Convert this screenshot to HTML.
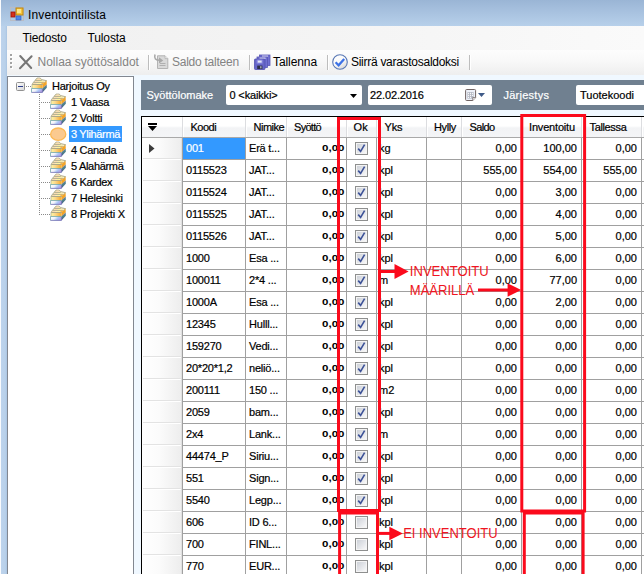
<!DOCTYPE html>
<html lang="fi"><head><meta charset="utf-8"><title>Inventointilista</title>
<style>
html,body{margin:0;padding:0;}
body{width:644px;height:574px;overflow:hidden;position:relative;background:#b9d1ea;font-family:"Liberation Sans",sans-serif;}
div,span{position:absolute;box-sizing:border-box;white-space:pre;}
.ms,.c,.hd{-webkit-text-stroke:0.2px currentColor;}
svg{position:absolute;overflow:visible;}
.seg{font-size:12px;line-height:16px;color:#000;}
.ms{font-size:11px;line-height:16px;color:#000;}
.dis{color:#838383;}
.hl{left:0;width:503px;height:1px;background:#a0a0a0;}
.vl{top:0;width:1px;background:#a0a0a0;}
.c{height:21px;line-height:21px;font-size:11px;}
.r{text-align:right;}
.l{letter-spacing:-0.2px;}
.b{font-weight:bold;}
.rh{left:1px;width:40px;height:21px;background:linear-gradient(90deg,#ffffff 0%,#fbfbfb 40%,#ececec 100%);border-bottom:1px solid #e3e3e3;}
.cb{width:13px;height:13px;border:1px solid #8e8f8f;background:#f4f4f4;}
.cb i{position:absolute;left:1px;top:1px;width:9px;height:9px;background:linear-gradient(135deg,#cdd1d8 0%,#e2e4e8 50%,#f8f8f9 100%);border:0;}
.sy{height:21px;line-height:20px;font-size:8.6px;font-weight:bold;text-align:right;transform:scaleX(1.34);transform-origin:100% 50%;}
.hd{top:1px;height:20px;font-size:11px;line-height:20px;}
</style></head><body>

<div id="titlebar" style="left:0;top:0;width:644px;height:26px;background:linear-gradient(180deg,#9ab5d5 0%,#a6c0de 40%,#b7d0ea 100%);"></div>
<div style="left:0;top:0;width:1px;height:574px;background:#fafbfd;"></div>
<div style="left:1px;top:26px;width:6px;height:548px;background:linear-gradient(90deg,#bdd3ec 0%,#b9d1ea 70%,#a9c4e2 100%);"></div>
<svg style="left:10px;top:7px" width="14" height="14" viewBox="0 0 14 14">
<rect x="0.5" y="0.5" width="13" height="13" fill="none" stroke="#b9bcc4" stroke-width="1"/>
<rect x="6" y="1" width="7" height="7" fill="#f6c33a" stroke="#b98410" stroke-width="1"/>
<rect x="7" y="2" width="4" height="4" fill="#fde58a"/>
<rect x="1" y="5" width="4" height="5" fill="#d6301c" stroke="#9c1408" stroke-width="0.8"/>
<rect x="6" y="9" width="5" height="4" fill="#4f86ea" stroke="#2b5fc4" stroke-width="0.6"/>
</svg>
<span class="seg" id="t_title" style="left:28px;top:7px;letter-spacing:0.13px;">Inventointilista</span>
<div style="left:7px;top:26px;width:637px;height:24px;background:linear-gradient(90deg,#f0f0f0 0%,#f4f4f4 50%,#fafafa 100%);"></div>
<span class="seg" id="t_m1" style="left:22.5px;top:30px;letter-spacing:-0.18px;">Tiedosto</span>
<span class="seg" id="t_m2" style="left:87.5px;top:30px;letter-spacing:-0.13px;">Tulosta</span>
<div style="left:7px;top:50px;width:637px;height:25px;background:linear-gradient(180deg,#fdfdfd 0%,#f8f8f8 45%,#eeeeee 100%);"></div>
<div style="left:11px;top:55px;width:2px;height:2px;background:#ffffff;"></div>
<div style="left:10px;top:54px;width:2px;height:2px;background:#a3a3a3;"></div>
<div style="left:11px;top:59px;width:2px;height:2px;background:#ffffff;"></div>
<div style="left:10px;top:58px;width:2px;height:2px;background:#a3a3a3;"></div>
<div style="left:11px;top:63px;width:2px;height:2px;background:#ffffff;"></div>
<div style="left:10px;top:62px;width:2px;height:2px;background:#a3a3a3;"></div>
<div style="left:11px;top:67px;width:2px;height:2px;background:#ffffff;"></div>
<div style="left:10px;top:66px;width:2px;height:2px;background:#a3a3a3;"></div>
<svg style="left:19px;top:55px" width="14" height="14" viewBox="0 0 14 14">
<path d="M1.2 1 L12.2 13 M12.6 1.2 L1 13.2" stroke="#767676" stroke-width="2" fill="none" stroke-linecap="round"/>
</svg>
<span class="seg dis" id="t_b1" style="left:37.5px;top:54px;">Nollaa syöttösaldot</span>
<div style="left:148px;top:55px;width:1px;height:15px;background:#bdbdbd;"></div>
<div style="left:149px;top:55px;width:1px;height:15px;background:#ffffff;"></div>
<svg style="left:153px;top:54px" width="16" height="16" viewBox="0 0 16 16">
<path d="M4.5 1.8 H12 L14.8 4.6 V14.5 H4.5 Z" fill="#d9d9d9" stroke="#b3b3b3" stroke-width="1"/>
<path d="M12 1.8 V4.6 H14.8" fill="#efefef" stroke="#b3b3b3" stroke-width="0.8"/>
<path d="M7 9.5 H12.5 M6.5 11.5 H12.5" stroke="#b0b0b0" stroke-width="1"/>
<path d="M2 0.5 C1 4.5 2.5 6.3 7 6.3" stroke="#a9a9a9" stroke-width="1.6" fill="none"/>
<path d="M6 3.2 L10.2 6.4 L6 9.6 Z" fill="#a9a9a9"/>
</svg>
<span class="seg dis" id="t_b2" style="left:172px;top:54px;letter-spacing:-0.25px;">Saldo talteen</span>
<div style="left:249px;top:55px;width:1px;height:15px;background:#bdbdbd;"></div>
<div style="left:250px;top:55px;width:1px;height:15px;background:#ffffff;"></div>
<svg style="left:254px;top:54px" width="16" height="16" viewBox="0 0 16 16">
<rect x="5.5" y="1" width="10.5" height="10.5" fill="#7170d2" stroke="#5856b4" stroke-width="0.8"/>
<rect x="8" y="1.6" width="6" height="1.2" fill="#e9e9fb"/>
<rect x="3" y="3" width="10.5" height="10.5" fill="#7170d2" stroke="#5856b4" stroke-width="0.8"/>
<rect x="5.5" y="3.6" width="6" height="1.2" fill="#e9e9fb"/>
<rect x="0.5" y="5" width="10.5" height="10.5" rx="0.8" fill="#6665c8" stroke="#5250ae" stroke-width="0.8"/>
<rect x="2.6" y="5.6" width="6" height="4" fill="#8c8be0"/>
<rect x="3.8" y="6.6" width="3.8" height="2" fill="#e4e6f4"/>
<rect x="3.2" y="11.6" width="5.2" height="3.4" fill="#2d3048"/>
<rect x="6" y="12.2" width="1.6" height="2.2" fill="#9aa0b0"/>
</svg>
<span class="seg" id="t_b3" style="left:273px;top:54px;letter-spacing:-0.09px;">Tallenna</span>
<div style="left:327px;top:55px;width:1px;height:15px;background:#bdbdbd;"></div>
<div style="left:328px;top:55px;width:1px;height:15px;background:#ffffff;"></div>
<svg style="left:332px;top:54px" width="16" height="16" viewBox="0 0 16 16">
<defs><linearGradient id="cg" x1="0" y1="0" x2="0.6" y2="1"><stop offset="0" stop-color="#ffffff"/><stop offset="0.6" stop-color="#fafafa"/><stop offset="1" stop-color="#d9d9d9"/></linearGradient></defs>
<circle cx="8" cy="8" r="7.3" fill="url(#cg)" stroke="#5877b4" stroke-width="1.1"/>
<path d="M3.6 8.2 L6.6 11.2 L12.2 4.9" fill="none" stroke="#3d72e6" stroke-width="2.3"/>
</svg>
<span class="seg" id="t_b4" style="left:351px;top:54px;letter-spacing:-0.28px;">Siirrä varastosaldoksi</span>
<div style="left:469px;top:55px;width:1px;height:15px;background:#bdbdbd;"></div>
<div style="left:470px;top:55px;width:1px;height:15px;background:#ffffff;"></div>
<div style="left:7px;top:75px;width:637px;height:499px;background:#f0f8ff;"></div>
<div id="tree" style="left:7px;top:76px;width:127px;height:520px;background:#fff;border:1px solid #828790;"></div>
<div style="left:39px;top:94px;width:1px;height:121px;background:repeating-linear-gradient(180deg,#8a8a8a 0 1px,transparent 1px 2px);"></div>
<div style="left:25px;top:86px;width:6px;height:1px;background:repeating-linear-gradient(90deg,transparent 0 1px,#8a8a8a 1px 2px);"></div>
<svg style="left:16px;top:82px" width="9" height="9" viewBox="0 0 9 9">
<defs><linearGradient id="eg" x1="0" y1="0" x2="1" y2="1"><stop offset="0" stop-color="#ffffff"/><stop offset="1" stop-color="#d6d6d6"/></linearGradient></defs>
<rect x="0.5" y="0.5" width="8" height="8" rx="1" fill="url(#eg)" stroke="#919191"/>
<rect x="2" y="4" width="5" height="1" fill="#2b3c8a"/></svg>
<svg style="left:31px;top:77px" width="17" height="16" viewBox="0 0 17 16">
<defs>
<linearGradient id="bf0" x1="0" y1="0" x2="1" y2="0"><stop offset="0" stop-color="#fdf7a4"/><stop offset="0.4" stop-color="#fbd98c"/><stop offset="0.7" stop-color="#f9c05a"/><stop offset="1" stop-color="#f3aa2e"/></linearGradient>
<linearGradient id="bw0" x1="0" y1="0" x2="1" y2="0.3"><stop offset="0" stop-color="#ffffff"/><stop offset="0.45" stop-color="#f2f4fb"/><stop offset="0.75" stop-color="#a9c6f7"/><stop offset="1" stop-color="#b7a6e6"/></linearGradient>
<linearGradient id="bs0" x1="0" y1="0" x2="0.3" y2="1"><stop offset="0" stop-color="#8079c0"/><stop offset="0.6" stop-color="#4b8286"/><stop offset="1" stop-color="#46468e"/></linearGradient>
</defs>
<path d="M1.2 7.4 L2.4 5.4 L4.2 3.3 L6 1.1 L9.3 1.1 L10.6 2.6 L15.6 3.7 L11.5 7.6 Z" fill="#fbeebc" stroke="#a9a688" stroke-width="0.9" stroke-linejoin="round"/>
<path d="M11.5 7.6 L15.6 3.7 L15.75 7.6 L11.5 11.4 Z" fill="#f2a42a"/>
<path d="M11.5 11.3 L15.75 7.5 L15.8 10.8 L11.4 15.5 Z" fill="url(#bs0)"/>
<path d="M1.1 7.6 H11.5 V11.4 H1.0 Z" fill="url(#bf0)"/>
<path d="M4.2 3.4 H10.8 M2.5 5.4 H12.9 M1.1 7.5 H11.6" stroke="#a9a688" stroke-width="0.9" fill="none"/>
<path d="M1 7.4 V11.4" stroke="#b7b28e" stroke-width="0.8"/>
<rect x="6.4" y="1.6" width="2.6" height="1.3" rx="0.6" fill="#fdd9b0"/>
<rect x="4.4" y="3.9" width="2.6" height="1.1" rx="0.5" fill="#fdd9b0"/><rect x="8.3" y="3.9" width="2.8" height="1.1" rx="0.5" fill="#fdf49a"/>
<rect x="2.6" y="5.9" width="2.6" height="1.1" rx="0.5" fill="#fdd9b0"/><rect x="6.6" y="5.9" width="3" height="1.1" rx="0.5" fill="#fdf49a"/><rect x="10.4" y="5.6" width="2.6" height="1.3" rx="0.5" fill="#f6b64a"/>
<path d="M0.5 11.5 H11.4 V15.4 H0.5 Z" fill="url(#bw0)"/>
<path d="M0.5 15.4 V11.5 H11.4" fill="none" stroke="#5d9c9f" stroke-width="0.7"/>
<path d="M0.5 15.4 H11.4 V11.8" fill="none" stroke="#5a5aa8" stroke-width="0.7"/>
</svg>
<span class="ms" id="t_root" style="left:52px;top:78px;letter-spacing:-0.229px;">Harjoitus Oy</span>
<div style="left:40px;top:102px;width:10px;height:1px;background:repeating-linear-gradient(90deg,transparent 0 1px,#8a8a8a 1px 2px);"></div>
<svg style="left:50px;top:93px" width="17" height="16" viewBox="0 0 17 16">
<defs>
<linearGradient id="bf1" x1="0" y1="0" x2="1" y2="0"><stop offset="0" stop-color="#fdf7a4"/><stop offset="0.4" stop-color="#fbd98c"/><stop offset="0.7" stop-color="#f9c05a"/><stop offset="1" stop-color="#f3aa2e"/></linearGradient>
<linearGradient id="bw1" x1="0" y1="0" x2="1" y2="0.3"><stop offset="0" stop-color="#ffffff"/><stop offset="0.45" stop-color="#f2f4fb"/><stop offset="0.75" stop-color="#a9c6f7"/><stop offset="1" stop-color="#b7a6e6"/></linearGradient>
<linearGradient id="bs1" x1="0" y1="0" x2="0.3" y2="1"><stop offset="0" stop-color="#8079c0"/><stop offset="0.6" stop-color="#4b8286"/><stop offset="1" stop-color="#46468e"/></linearGradient>
</defs>
<path d="M1.2 7.4 L2.4 5.4 L4.2 3.3 L6 1.1 L9.3 1.1 L10.6 2.6 L15.6 3.7 L11.5 7.6 Z" fill="#fbeebc" stroke="#a9a688" stroke-width="0.9" stroke-linejoin="round"/>
<path d="M11.5 7.6 L15.6 3.7 L15.75 7.6 L11.5 11.4 Z" fill="#f2a42a"/>
<path d="M11.5 11.3 L15.75 7.5 L15.8 10.8 L11.4 15.5 Z" fill="url(#bs1)"/>
<path d="M1.1 7.6 H11.5 V11.4 H1.0 Z" fill="url(#bf1)"/>
<path d="M4.2 3.4 H10.8 M2.5 5.4 H12.9 M1.1 7.5 H11.6" stroke="#a9a688" stroke-width="0.9" fill="none"/>
<path d="M1 7.4 V11.4" stroke="#b7b28e" stroke-width="0.8"/>
<rect x="6.4" y="1.6" width="2.6" height="1.3" rx="0.6" fill="#fdd9b0"/>
<rect x="4.4" y="3.9" width="2.6" height="1.1" rx="0.5" fill="#fdd9b0"/><rect x="8.3" y="3.9" width="2.8" height="1.1" rx="0.5" fill="#fdf49a"/>
<rect x="2.6" y="5.9" width="2.6" height="1.1" rx="0.5" fill="#fdd9b0"/><rect x="6.6" y="5.9" width="3" height="1.1" rx="0.5" fill="#fdf49a"/><rect x="10.4" y="5.6" width="2.6" height="1.3" rx="0.5" fill="#f6b64a"/>
<path d="M0.5 11.5 H11.4 V15.4 H0.5 Z" fill="url(#bw1)"/>
<path d="M0.5 15.4 V11.5 H11.4" fill="none" stroke="#5d9c9f" stroke-width="0.7"/>
<path d="M0.5 15.4 H11.4 V11.8" fill="none" stroke="#5a5aa8" stroke-width="0.7"/>
</svg>
<span class="ms" id="t_k0" style="left:71px;top:94px;letter-spacing:-0.208px;">1 Vaasa</span>
<div style="left:40px;top:118px;width:10px;height:1px;background:repeating-linear-gradient(90deg,transparent 0 1px,#8a8a8a 1px 2px);"></div>
<svg style="left:50px;top:109px" width="17" height="16" viewBox="0 0 17 16">
<defs>
<linearGradient id="bf2" x1="0" y1="0" x2="1" y2="0"><stop offset="0" stop-color="#fdf7a4"/><stop offset="0.4" stop-color="#fbd98c"/><stop offset="0.7" stop-color="#f9c05a"/><stop offset="1" stop-color="#f3aa2e"/></linearGradient>
<linearGradient id="bw2" x1="0" y1="0" x2="1" y2="0.3"><stop offset="0" stop-color="#ffffff"/><stop offset="0.45" stop-color="#f2f4fb"/><stop offset="0.75" stop-color="#a9c6f7"/><stop offset="1" stop-color="#b7a6e6"/></linearGradient>
<linearGradient id="bs2" x1="0" y1="0" x2="0.3" y2="1"><stop offset="0" stop-color="#8079c0"/><stop offset="0.6" stop-color="#4b8286"/><stop offset="1" stop-color="#46468e"/></linearGradient>
</defs>
<path d="M1.2 7.4 L2.4 5.4 L4.2 3.3 L6 1.1 L9.3 1.1 L10.6 2.6 L15.6 3.7 L11.5 7.6 Z" fill="#fbeebc" stroke="#a9a688" stroke-width="0.9" stroke-linejoin="round"/>
<path d="M11.5 7.6 L15.6 3.7 L15.75 7.6 L11.5 11.4 Z" fill="#f2a42a"/>
<path d="M11.5 11.3 L15.75 7.5 L15.8 10.8 L11.4 15.5 Z" fill="url(#bs2)"/>
<path d="M1.1 7.6 H11.5 V11.4 H1.0 Z" fill="url(#bf2)"/>
<path d="M4.2 3.4 H10.8 M2.5 5.4 H12.9 M1.1 7.5 H11.6" stroke="#a9a688" stroke-width="0.9" fill="none"/>
<path d="M1 7.4 V11.4" stroke="#b7b28e" stroke-width="0.8"/>
<rect x="6.4" y="1.6" width="2.6" height="1.3" rx="0.6" fill="#fdd9b0"/>
<rect x="4.4" y="3.9" width="2.6" height="1.1" rx="0.5" fill="#fdd9b0"/><rect x="8.3" y="3.9" width="2.8" height="1.1" rx="0.5" fill="#fdf49a"/>
<rect x="2.6" y="5.9" width="2.6" height="1.1" rx="0.5" fill="#fdd9b0"/><rect x="6.6" y="5.9" width="3" height="1.1" rx="0.5" fill="#fdf49a"/><rect x="10.4" y="5.6" width="2.6" height="1.3" rx="0.5" fill="#f6b64a"/>
<path d="M0.5 11.5 H11.4 V15.4 H0.5 Z" fill="url(#bw2)"/>
<path d="M0.5 15.4 V11.5 H11.4" fill="none" stroke="#5d9c9f" stroke-width="0.7"/>
<path d="M0.5 15.4 H11.4 V11.8" fill="none" stroke="#5a5aa8" stroke-width="0.7"/>
</svg>
<span class="ms" id="t_k1" style="left:71px;top:110px;letter-spacing:-0.217px;">2 Voltti</span>
<div style="left:40px;top:134px;width:10px;height:1px;background:repeating-linear-gradient(90deg,transparent 0 1px,#8a8a8a 1px 2px);"></div>
<svg style="left:50px;top:126px" width="17" height="16" viewBox="0 0 17 16"><ellipse cx="8.2" cy="8.2" rx="7.6" ry="6.2" fill="#fbca90" stroke="#fcb955" stroke-width="1.3"/></svg>
<div style="left:69px;top:126px;width:53px;height:16px;background:#3399ff;"></div>
<span class="ms" id="t_k2" style="left:71px;top:126px;color:#fff;letter-spacing:-0.331px;">3 Ylihärmä</span>
<div style="left:40px;top:150px;width:10px;height:1px;background:repeating-linear-gradient(90deg,transparent 0 1px,#8a8a8a 1px 2px);"></div>
<svg style="left:50px;top:141px" width="17" height="16" viewBox="0 0 17 16">
<defs>
<linearGradient id="bf4" x1="0" y1="0" x2="1" y2="0"><stop offset="0" stop-color="#fdf7a4"/><stop offset="0.4" stop-color="#fbd98c"/><stop offset="0.7" stop-color="#f9c05a"/><stop offset="1" stop-color="#f3aa2e"/></linearGradient>
<linearGradient id="bw4" x1="0" y1="0" x2="1" y2="0.3"><stop offset="0" stop-color="#ffffff"/><stop offset="0.45" stop-color="#f2f4fb"/><stop offset="0.75" stop-color="#a9c6f7"/><stop offset="1" stop-color="#b7a6e6"/></linearGradient>
<linearGradient id="bs4" x1="0" y1="0" x2="0.3" y2="1"><stop offset="0" stop-color="#8079c0"/><stop offset="0.6" stop-color="#4b8286"/><stop offset="1" stop-color="#46468e"/></linearGradient>
</defs>
<path d="M1.2 7.4 L2.4 5.4 L4.2 3.3 L6 1.1 L9.3 1.1 L10.6 2.6 L15.6 3.7 L11.5 7.6 Z" fill="#fbeebc" stroke="#a9a688" stroke-width="0.9" stroke-linejoin="round"/>
<path d="M11.5 7.6 L15.6 3.7 L15.75 7.6 L11.5 11.4 Z" fill="#f2a42a"/>
<path d="M11.5 11.3 L15.75 7.5 L15.8 10.8 L11.4 15.5 Z" fill="url(#bs4)"/>
<path d="M1.1 7.6 H11.5 V11.4 H1.0 Z" fill="url(#bf4)"/>
<path d="M4.2 3.4 H10.8 M2.5 5.4 H12.9 M1.1 7.5 H11.6" stroke="#a9a688" stroke-width="0.9" fill="none"/>
<path d="M1 7.4 V11.4" stroke="#b7b28e" stroke-width="0.8"/>
<rect x="6.4" y="1.6" width="2.6" height="1.3" rx="0.6" fill="#fdd9b0"/>
<rect x="4.4" y="3.9" width="2.6" height="1.1" rx="0.5" fill="#fdd9b0"/><rect x="8.3" y="3.9" width="2.8" height="1.1" rx="0.5" fill="#fdf49a"/>
<rect x="2.6" y="5.9" width="2.6" height="1.1" rx="0.5" fill="#fdd9b0"/><rect x="6.6" y="5.9" width="3" height="1.1" rx="0.5" fill="#fdf49a"/><rect x="10.4" y="5.6" width="2.6" height="1.3" rx="0.5" fill="#f6b64a"/>
<path d="M0.5 11.5 H11.4 V15.4 H0.5 Z" fill="url(#bw4)"/>
<path d="M0.5 15.4 V11.5 H11.4" fill="none" stroke="#5d9c9f" stroke-width="0.7"/>
<path d="M0.5 15.4 H11.4 V11.8" fill="none" stroke="#5a5aa8" stroke-width="0.7"/>
</svg>
<span class="ms" id="t_k3" style="left:71px;top:142px;letter-spacing:-0.315px;">4 Canada</span>
<div style="left:40px;top:166px;width:10px;height:1px;background:repeating-linear-gradient(90deg,transparent 0 1px,#8a8a8a 1px 2px);"></div>
<svg style="left:50px;top:157px" width="17" height="16" viewBox="0 0 17 16">
<defs>
<linearGradient id="bf5" x1="0" y1="0" x2="1" y2="0"><stop offset="0" stop-color="#fdf7a4"/><stop offset="0.4" stop-color="#fbd98c"/><stop offset="0.7" stop-color="#f9c05a"/><stop offset="1" stop-color="#f3aa2e"/></linearGradient>
<linearGradient id="bw5" x1="0" y1="0" x2="1" y2="0.3"><stop offset="0" stop-color="#ffffff"/><stop offset="0.45" stop-color="#f2f4fb"/><stop offset="0.75" stop-color="#a9c6f7"/><stop offset="1" stop-color="#b7a6e6"/></linearGradient>
<linearGradient id="bs5" x1="0" y1="0" x2="0.3" y2="1"><stop offset="0" stop-color="#8079c0"/><stop offset="0.6" stop-color="#4b8286"/><stop offset="1" stop-color="#46468e"/></linearGradient>
</defs>
<path d="M1.2 7.4 L2.4 5.4 L4.2 3.3 L6 1.1 L9.3 1.1 L10.6 2.6 L15.6 3.7 L11.5 7.6 Z" fill="#fbeebc" stroke="#a9a688" stroke-width="0.9" stroke-linejoin="round"/>
<path d="M11.5 7.6 L15.6 3.7 L15.75 7.6 L11.5 11.4 Z" fill="#f2a42a"/>
<path d="M11.5 11.3 L15.75 7.5 L15.8 10.8 L11.4 15.5 Z" fill="url(#bs5)"/>
<path d="M1.1 7.6 H11.5 V11.4 H1.0 Z" fill="url(#bf5)"/>
<path d="M4.2 3.4 H10.8 M2.5 5.4 H12.9 M1.1 7.5 H11.6" stroke="#a9a688" stroke-width="0.9" fill="none"/>
<path d="M1 7.4 V11.4" stroke="#b7b28e" stroke-width="0.8"/>
<rect x="6.4" y="1.6" width="2.6" height="1.3" rx="0.6" fill="#fdd9b0"/>
<rect x="4.4" y="3.9" width="2.6" height="1.1" rx="0.5" fill="#fdd9b0"/><rect x="8.3" y="3.9" width="2.8" height="1.1" rx="0.5" fill="#fdf49a"/>
<rect x="2.6" y="5.9" width="2.6" height="1.1" rx="0.5" fill="#fdd9b0"/><rect x="6.6" y="5.9" width="3" height="1.1" rx="0.5" fill="#fdf49a"/><rect x="10.4" y="5.6" width="2.6" height="1.3" rx="0.5" fill="#f6b64a"/>
<path d="M0.5 11.5 H11.4 V15.4 H0.5 Z" fill="url(#bw5)"/>
<path d="M0.5 15.4 V11.5 H11.4" fill="none" stroke="#5d9c9f" stroke-width="0.7"/>
<path d="M0.5 15.4 H11.4 V11.8" fill="none" stroke="#5a5aa8" stroke-width="0.7"/>
</svg>
<span class="ms" id="t_k4" style="left:71px;top:158px;letter-spacing:-0.316px;">5 Alahärmä</span>
<div style="left:40px;top:182px;width:10px;height:1px;background:repeating-linear-gradient(90deg,transparent 0 1px,#8a8a8a 1px 2px);"></div>
<svg style="left:50px;top:173px" width="17" height="16" viewBox="0 0 17 16">
<defs>
<linearGradient id="bf6" x1="0" y1="0" x2="1" y2="0"><stop offset="0" stop-color="#fdf7a4"/><stop offset="0.4" stop-color="#fbd98c"/><stop offset="0.7" stop-color="#f9c05a"/><stop offset="1" stop-color="#f3aa2e"/></linearGradient>
<linearGradient id="bw6" x1="0" y1="0" x2="1" y2="0.3"><stop offset="0" stop-color="#ffffff"/><stop offset="0.45" stop-color="#f2f4fb"/><stop offset="0.75" stop-color="#a9c6f7"/><stop offset="1" stop-color="#b7a6e6"/></linearGradient>
<linearGradient id="bs6" x1="0" y1="0" x2="0.3" y2="1"><stop offset="0" stop-color="#8079c0"/><stop offset="0.6" stop-color="#4b8286"/><stop offset="1" stop-color="#46468e"/></linearGradient>
</defs>
<path d="M1.2 7.4 L2.4 5.4 L4.2 3.3 L6 1.1 L9.3 1.1 L10.6 2.6 L15.6 3.7 L11.5 7.6 Z" fill="#fbeebc" stroke="#a9a688" stroke-width="0.9" stroke-linejoin="round"/>
<path d="M11.5 7.6 L15.6 3.7 L15.75 7.6 L11.5 11.4 Z" fill="#f2a42a"/>
<path d="M11.5 11.3 L15.75 7.5 L15.8 10.8 L11.4 15.5 Z" fill="url(#bs6)"/>
<path d="M1.1 7.6 H11.5 V11.4 H1.0 Z" fill="url(#bf6)"/>
<path d="M4.2 3.4 H10.8 M2.5 5.4 H12.9 M1.1 7.5 H11.6" stroke="#a9a688" stroke-width="0.9" fill="none"/>
<path d="M1 7.4 V11.4" stroke="#b7b28e" stroke-width="0.8"/>
<rect x="6.4" y="1.6" width="2.6" height="1.3" rx="0.6" fill="#fdd9b0"/>
<rect x="4.4" y="3.9" width="2.6" height="1.1" rx="0.5" fill="#fdd9b0"/><rect x="8.3" y="3.9" width="2.8" height="1.1" rx="0.5" fill="#fdf49a"/>
<rect x="2.6" y="5.9" width="2.6" height="1.1" rx="0.5" fill="#fdd9b0"/><rect x="6.6" y="5.9" width="3" height="1.1" rx="0.5" fill="#fdf49a"/><rect x="10.4" y="5.6" width="2.6" height="1.3" rx="0.5" fill="#f6b64a"/>
<path d="M0.5 11.5 H11.4 V15.4 H0.5 Z" fill="url(#bw6)"/>
<path d="M0.5 15.4 V11.5 H11.4" fill="none" stroke="#5d9c9f" stroke-width="0.7"/>
<path d="M0.5 15.4 H11.4 V11.8" fill="none" stroke="#5a5aa8" stroke-width="0.7"/>
</svg>
<span class="ms" id="t_k5" style="left:71px;top:174px;letter-spacing:-0.347px;">6 Kardex</span>
<div style="left:40px;top:198px;width:10px;height:1px;background:repeating-linear-gradient(90deg,transparent 0 1px,#8a8a8a 1px 2px);"></div>
<svg style="left:50px;top:189px" width="17" height="16" viewBox="0 0 17 16">
<defs>
<linearGradient id="bf7" x1="0" y1="0" x2="1" y2="0"><stop offset="0" stop-color="#fdf7a4"/><stop offset="0.4" stop-color="#fbd98c"/><stop offset="0.7" stop-color="#f9c05a"/><stop offset="1" stop-color="#f3aa2e"/></linearGradient>
<linearGradient id="bw7" x1="0" y1="0" x2="1" y2="0.3"><stop offset="0" stop-color="#ffffff"/><stop offset="0.45" stop-color="#f2f4fb"/><stop offset="0.75" stop-color="#a9c6f7"/><stop offset="1" stop-color="#b7a6e6"/></linearGradient>
<linearGradient id="bs7" x1="0" y1="0" x2="0.3" y2="1"><stop offset="0" stop-color="#8079c0"/><stop offset="0.6" stop-color="#4b8286"/><stop offset="1" stop-color="#46468e"/></linearGradient>
</defs>
<path d="M1.2 7.4 L2.4 5.4 L4.2 3.3 L6 1.1 L9.3 1.1 L10.6 2.6 L15.6 3.7 L11.5 7.6 Z" fill="#fbeebc" stroke="#a9a688" stroke-width="0.9" stroke-linejoin="round"/>
<path d="M11.5 7.6 L15.6 3.7 L15.75 7.6 L11.5 11.4 Z" fill="#f2a42a"/>
<path d="M11.5 11.3 L15.75 7.5 L15.8 10.8 L11.4 15.5 Z" fill="url(#bs7)"/>
<path d="M1.1 7.6 H11.5 V11.4 H1.0 Z" fill="url(#bf7)"/>
<path d="M4.2 3.4 H10.8 M2.5 5.4 H12.9 M1.1 7.5 H11.6" stroke="#a9a688" stroke-width="0.9" fill="none"/>
<path d="M1 7.4 V11.4" stroke="#b7b28e" stroke-width="0.8"/>
<rect x="6.4" y="1.6" width="2.6" height="1.3" rx="0.6" fill="#fdd9b0"/>
<rect x="4.4" y="3.9" width="2.6" height="1.1" rx="0.5" fill="#fdd9b0"/><rect x="8.3" y="3.9" width="2.8" height="1.1" rx="0.5" fill="#fdf49a"/>
<rect x="2.6" y="5.9" width="2.6" height="1.1" rx="0.5" fill="#fdd9b0"/><rect x="6.6" y="5.9" width="3" height="1.1" rx="0.5" fill="#fdf49a"/><rect x="10.4" y="5.6" width="2.6" height="1.3" rx="0.5" fill="#f6b64a"/>
<path d="M0.5 11.5 H11.4 V15.4 H0.5 Z" fill="url(#bw7)"/>
<path d="M0.5 15.4 V11.5 H11.4" fill="none" stroke="#5d9c9f" stroke-width="0.7"/>
<path d="M0.5 15.4 H11.4 V11.8" fill="none" stroke="#5a5aa8" stroke-width="0.7"/>
</svg>
<span class="ms" id="t_k6" style="left:71px;top:190px;letter-spacing:-0.19px;">7 Helesinki</span>
<div style="left:40px;top:214px;width:10px;height:1px;background:repeating-linear-gradient(90deg,transparent 0 1px,#8a8a8a 1px 2px);"></div>
<svg style="left:50px;top:205px" width="17" height="16" viewBox="0 0 17 16">
<defs>
<linearGradient id="bf8" x1="0" y1="0" x2="1" y2="0"><stop offset="0" stop-color="#fdf7a4"/><stop offset="0.4" stop-color="#fbd98c"/><stop offset="0.7" stop-color="#f9c05a"/><stop offset="1" stop-color="#f3aa2e"/></linearGradient>
<linearGradient id="bw8" x1="0" y1="0" x2="1" y2="0.3"><stop offset="0" stop-color="#ffffff"/><stop offset="0.45" stop-color="#f2f4fb"/><stop offset="0.75" stop-color="#a9c6f7"/><stop offset="1" stop-color="#b7a6e6"/></linearGradient>
<linearGradient id="bs8" x1="0" y1="0" x2="0.3" y2="1"><stop offset="0" stop-color="#8079c0"/><stop offset="0.6" stop-color="#4b8286"/><stop offset="1" stop-color="#46468e"/></linearGradient>
</defs>
<path d="M1.2 7.4 L2.4 5.4 L4.2 3.3 L6 1.1 L9.3 1.1 L10.6 2.6 L15.6 3.7 L11.5 7.6 Z" fill="#fbeebc" stroke="#a9a688" stroke-width="0.9" stroke-linejoin="round"/>
<path d="M11.5 7.6 L15.6 3.7 L15.75 7.6 L11.5 11.4 Z" fill="#f2a42a"/>
<path d="M11.5 11.3 L15.75 7.5 L15.8 10.8 L11.4 15.5 Z" fill="url(#bs8)"/>
<path d="M1.1 7.6 H11.5 V11.4 H1.0 Z" fill="url(#bf8)"/>
<path d="M4.2 3.4 H10.8 M2.5 5.4 H12.9 M1.1 7.5 H11.6" stroke="#a9a688" stroke-width="0.9" fill="none"/>
<path d="M1 7.4 V11.4" stroke="#b7b28e" stroke-width="0.8"/>
<rect x="6.4" y="1.6" width="2.6" height="1.3" rx="0.6" fill="#fdd9b0"/>
<rect x="4.4" y="3.9" width="2.6" height="1.1" rx="0.5" fill="#fdd9b0"/><rect x="8.3" y="3.9" width="2.8" height="1.1" rx="0.5" fill="#fdf49a"/>
<rect x="2.6" y="5.9" width="2.6" height="1.1" rx="0.5" fill="#fdd9b0"/><rect x="6.6" y="5.9" width="3" height="1.1" rx="0.5" fill="#fdf49a"/><rect x="10.4" y="5.6" width="2.6" height="1.3" rx="0.5" fill="#f6b64a"/>
<path d="M0.5 11.5 H11.4 V15.4 H0.5 Z" fill="url(#bw8)"/>
<path d="M0.5 15.4 V11.5 H11.4" fill="none" stroke="#5d9c9f" stroke-width="0.7"/>
<path d="M0.5 15.4 H11.4 V11.8" fill="none" stroke="#5a5aa8" stroke-width="0.7"/>
</svg>
<span class="ms" id="t_k7" style="left:71px;top:206px;letter-spacing:-0.186px;">8 Projekti X</span>
<div style="left:141px;top:80px;width:503px;height:30px;background:#708090;"></div>
<span class="ms" id="t_l1" style="left:146.5px;top:86.5px;color:#fff;">Syöttölomake</span>
<div style="left:226px;top:85px;width:136px;height:20px;background:#fff;border-radius:2px;"></div>
<span class="ms" id="t_c1" style="left:229.5px;top:87px;letter-spacing:-0.15px;">0 &lt;kaikki&gt;</span>
<svg style="left:350px;top:94px" width="7" height="4" viewBox="0 0 7 4"><path d="M0 0 H7 L3.5 4 Z" fill="#000"/></svg>
<div style="left:368px;top:85px;width:124px;height:20px;background:#fff;border-radius:2px;"></div>
<span class="ms" id="t_c2" style="left:370px;top:87px;letter-spacing:-0.13px;">22.02.2016</span>
<svg style="left:465px;top:89px" width="12" height="13" viewBox="0 0 12 13">
<path d="M1.6 0.5 H9.6 Q10.6 0.5 10.6 1.5 V8.6 L7.8 11.5 H1.6 Q0.6 11.5 0.6 10.5 V1.5 Q0.6 0.5 1.6 0.5 Z" fill="#eef1f9" stroke="#6f6363" stroke-width="1"/>
<rect x="2.4" y="3" width="6.2" height="6.6" fill="#b4b8c4"/>
<g fill="#fff"><rect x="3" y="3.8" width="1.1" height="1.1"/><rect x="5" y="3.8" width="1.1" height="1.1"/><rect x="7" y="3.8" width="1.1" height="1.1"/>
<rect x="3" y="5.8" width="1.1" height="1.1"/><rect x="5" y="5.8" width="1.1" height="1.1"/><rect x="7" y="5.8" width="1.1" height="1.1"/>
<rect x="3" y="7.8" width="1.1" height="1.1"/><rect x="5" y="7.8" width="1.1" height="1.1"/></g>
<path d="M7.8 11.5 V8.6 H10.6" fill="#fff" stroke="#6f6363" stroke-width="0.8"/>
</svg>
<svg style="left:478px;top:93px" width="7" height="4" viewBox="0 0 7 4"><path d="M0 0 H7 L3.5 4 Z" fill="#3f5a88"/></svg>
<span class="ms" id="t_l2" style="left:503.5px;top:86.5px;color:#fff;letter-spacing:0.25px;">Järjestys</span>
<div style="left:576px;top:85px;width:80px;height:20px;background:#fff;border-radius:2px;"></div>
<span class="ms" id="t_c3" style="left:580px;top:87px;">Tuotekoodi</span>
<div id="grid" style="left:141px;top:116px;width:503px;height:470px;background:#fff;border-left:1px solid #000;border-top:1px solid #000;overflow:hidden;">
<div style="left:0;top:0;width:503px;height:20px;background:linear-gradient(180deg,#ffffff 0%,#ffffff 45%,#f2f3f5 55%,#f4f5f7 100%);"></div>
<div style="left:40px;top:0;width:1px;height:20px;background:#dcdde0;"></div>
<div style="left:41px;top:0;width:1px;height:20px;background:#ffffff;"></div>
<div style="left:103px;top:0;width:1px;height:20px;background:#dcdde0;"></div>
<div style="left:104px;top:0;width:1px;height:20px;background:#ffffff;"></div>
<div style="left:144px;top:0;width:1px;height:20px;background:#dcdde0;"></div>
<div style="left:145px;top:0;width:1px;height:20px;background:#ffffff;"></div>
<div style="left:204px;top:0;width:1px;height:20px;background:#dcdde0;"></div>
<div style="left:205px;top:0;width:1px;height:20px;background:#ffffff;"></div>
<div style="left:234px;top:0;width:1px;height:20px;background:#dcdde0;"></div>
<div style="left:235px;top:0;width:1px;height:20px;background:#ffffff;"></div>
<div style="left:284px;top:0;width:1px;height:20px;background:#dcdde0;"></div>
<div style="left:285px;top:0;width:1px;height:20px;background:#ffffff;"></div>
<div style="left:319px;top:0;width:1px;height:20px;background:#dcdde0;"></div>
<div style="left:320px;top:0;width:1px;height:20px;background:#ffffff;"></div>
<div style="left:379px;top:0;width:1px;height:20px;background:#dcdde0;"></div>
<div style="left:380px;top:0;width:1px;height:20px;background:#ffffff;"></div>
<div style="left:439px;top:0;width:1px;height:20px;background:#dcdde0;"></div>
<div style="left:440px;top:0;width:1px;height:20px;background:#ffffff;"></div>
<div style="left:499px;top:0;width:1px;height:20px;background:#dcdde0;"></div>
<div style="left:500px;top:0;width:1px;height:20px;background:#ffffff;"></div>
<div class="hl" style="top:20px;background:#a9a9a9;"></div>
<svg style="left:6px;top:6px" width="9" height="8" viewBox="0 0 9 8"><rect x="0" y="0" width="9" height="2" fill="#000"/><path d="M0 3 H9 L4.5 8 Z" fill="#000"/></svg>
<span class="hd" id="t_h0" style="left:48.5px;top:0px;letter-spacing:-0.5px;">Koodi</span>
<span class="hd" id="t_h1" style="left:111.5px;top:0px;letter-spacing:-0.5px;">Nimike</span>
<span class="hd" id="t_h2" style="left:152px;top:0px;letter-spacing:-0.7px;">Syöttö</span>
<span class="hd" id="t_h3" style="left:211.5px;top:0px;letter-spacing:0.1px;">Ok</span>
<span class="hd" id="t_h4" style="left:242.5px;top:0px;letter-spacing:-0.2px;">Yks</span>
<span class="hd" id="t_h5" style="left:292px;top:0px;letter-spacing:-0.4px;">Hylly</span>
<span class="hd" id="t_h6" style="left:327.5px;top:0px;letter-spacing:-0.6px;">Saldo</span>
<span class="hd" id="t_h7" style="left:387px;top:0px;letter-spacing:-0.18px;">Inventoitu</span>
<span class="hd" id="t_h8" style="left:447.5px;top:0px;letter-spacing:-0.35px;">Tallessa</span>
<div class="rh" style="top:21px;"></div>
<div style="left:41px;top:21px;width:62px;height:21px;background:#3399ff;"></div>
<svg style="left:7px;top:27px" width="6" height="9" viewBox="0 0 6 9"><path d="M0 0 L5.5 4.5 L0 9 Z" fill="#3c3c3c"/></svg>
<span class="c l" style="color:#fff;left:44px;top:21px;">001</span>
<span class="c l" style="left:107px;top:21px;">Erä t...</span>
<span class="sy" style="left:158px;width:44.5px;top:21px;">0,00</span>
<div class="cb" style="left:213px;top:25px;"><i></i><svg style="left:1px;top:1px" width="9" height="9" viewBox="0 0 9 9"><path d="M1.2 4.6 L3.6 7.3 L7.6 0.7" fill="none" stroke="#3c5197" stroke-width="1.6"/></svg></div>
<span class="c" style="left:237px;top:21px;">kg</span>
<span class="c r" style="left:328px;width:47px;top:21px;">0,00</span>
<span class="c r" style="left:388px;width:47px;top:21px;">100,00</span>
<span class="c r" style="left:448px;width:47px;top:21px;">0,00</span>
<div class="hl" style="left:41px;top:42px;"></div>
<div class="rh" style="top:43px;"></div>
<span class="c l" style="left:44px;top:43px;">0115523</span>
<span class="c l" style="left:107px;top:43px;">JAT...</span>
<span class="sy" style="left:158px;width:44.5px;top:43px;">0,00</span>
<div class="cb" style="left:213px;top:47px;"><i></i><svg style="left:1px;top:1px" width="9" height="9" viewBox="0 0 9 9"><path d="M1.2 4.6 L3.6 7.3 L7.6 0.7" fill="none" stroke="#3c5197" stroke-width="1.6"/></svg></div>
<span class="c" style="left:237px;top:43px;">kpl</span>
<span class="c r" style="left:328px;width:47px;top:43px;">555,00</span>
<span class="c r" style="left:388px;width:47px;top:43px;">554,00</span>
<span class="c r" style="left:448px;width:47px;top:43px;">555,00</span>
<div class="hl" style="left:41px;top:64px;"></div>
<div class="rh" style="top:65px;"></div>
<span class="c l" style="left:44px;top:65px;">0115524</span>
<span class="c l" style="left:107px;top:65px;">JAT...</span>
<span class="sy" style="left:158px;width:44.5px;top:65px;">0,00</span>
<div class="cb" style="left:213px;top:69px;"><i></i><svg style="left:1px;top:1px" width="9" height="9" viewBox="0 0 9 9"><path d="M1.2 4.6 L3.6 7.3 L7.6 0.7" fill="none" stroke="#3c5197" stroke-width="1.6"/></svg></div>
<span class="c" style="left:237px;top:65px;">kpl</span>
<span class="c r" style="left:328px;width:47px;top:65px;">0,00</span>
<span class="c r" style="left:388px;width:47px;top:65px;">3,00</span>
<span class="c r" style="left:448px;width:47px;top:65px;">0,00</span>
<div class="hl" style="left:41px;top:86px;"></div>
<div class="rh" style="top:87px;"></div>
<span class="c l" style="left:44px;top:87px;">0115525</span>
<span class="c l" style="left:107px;top:87px;">JAT...</span>
<span class="sy" style="left:158px;width:44.5px;top:87px;">0,00</span>
<div class="cb" style="left:213px;top:91px;"><i></i><svg style="left:1px;top:1px" width="9" height="9" viewBox="0 0 9 9"><path d="M1.2 4.6 L3.6 7.3 L7.6 0.7" fill="none" stroke="#3c5197" stroke-width="1.6"/></svg></div>
<span class="c" style="left:237px;top:87px;">kpl</span>
<span class="c r" style="left:328px;width:47px;top:87px;">0,00</span>
<span class="c r" style="left:388px;width:47px;top:87px;">4,00</span>
<span class="c r" style="left:448px;width:47px;top:87px;">0,00</span>
<div class="hl" style="left:41px;top:108px;"></div>
<div class="rh" style="top:109px;"></div>
<span class="c l" style="left:44px;top:109px;">0115526</span>
<span class="c l" style="left:107px;top:109px;">JAT...</span>
<span class="sy" style="left:158px;width:44.5px;top:109px;">0,00</span>
<div class="cb" style="left:213px;top:113px;"><i></i><svg style="left:1px;top:1px" width="9" height="9" viewBox="0 0 9 9"><path d="M1.2 4.6 L3.6 7.3 L7.6 0.7" fill="none" stroke="#3c5197" stroke-width="1.6"/></svg></div>
<span class="c" style="left:237px;top:109px;">kpl</span>
<span class="c r" style="left:328px;width:47px;top:109px;">0,00</span>
<span class="c r" style="left:388px;width:47px;top:109px;">5,00</span>
<span class="c r" style="left:448px;width:47px;top:109px;">0,00</span>
<div class="hl" style="left:41px;top:130px;"></div>
<div class="rh" style="top:131px;"></div>
<span class="c l" style="left:44px;top:131px;">1000</span>
<span class="c l" style="left:107px;top:131px;">Esa ...</span>
<span class="sy" style="left:158px;width:44.5px;top:131px;">0,00</span>
<div class="cb" style="left:213px;top:135px;"><i></i><svg style="left:1px;top:1px" width="9" height="9" viewBox="0 0 9 9"><path d="M1.2 4.6 L3.6 7.3 L7.6 0.7" fill="none" stroke="#3c5197" stroke-width="1.6"/></svg></div>
<span class="c" style="left:237px;top:131px;">kpl</span>
<span class="c r" style="left:328px;width:47px;top:131px;">0,00</span>
<span class="c r" style="left:388px;width:47px;top:131px;">6,00</span>
<span class="c r" style="left:448px;width:47px;top:131px;">0,00</span>
<div class="hl" style="left:41px;top:152px;"></div>
<div class="rh" style="top:153px;"></div>
<span class="c l" style="left:44px;top:153px;">100011</span>
<span class="c l" style="left:107px;top:153px;">2*4 ...</span>
<span class="sy" style="left:158px;width:44.5px;top:153px;">0,00</span>
<div class="cb" style="left:213px;top:157px;"><i></i><svg style="left:1px;top:1px" width="9" height="9" viewBox="0 0 9 9"><path d="M1.2 4.6 L3.6 7.3 L7.6 0.7" fill="none" stroke="#3c5197" stroke-width="1.6"/></svg></div>
<span class="c" style="left:237px;top:153px;">m</span>
<span class="c r" style="left:328px;width:47px;top:153px;">0,00</span>
<span class="c r" style="left:388px;width:47px;top:153px;">77,00</span>
<span class="c r" style="left:448px;width:47px;top:153px;">0,00</span>
<div class="hl" style="left:41px;top:174px;"></div>
<div class="rh" style="top:175px;"></div>
<span class="c l" style="left:44px;top:175px;">1000A</span>
<span class="c l" style="left:107px;top:175px;">Esa ...</span>
<span class="sy" style="left:158px;width:44.5px;top:175px;">0,00</span>
<div class="cb" style="left:213px;top:179px;"><i></i><svg style="left:1px;top:1px" width="9" height="9" viewBox="0 0 9 9"><path d="M1.2 4.6 L3.6 7.3 L7.6 0.7" fill="none" stroke="#3c5197" stroke-width="1.6"/></svg></div>
<span class="c" style="left:237px;top:175px;">kpl</span>
<span class="c r" style="left:328px;width:47px;top:175px;">0,00</span>
<span class="c r" style="left:388px;width:47px;top:175px;">2,00</span>
<span class="c r" style="left:448px;width:47px;top:175px;">0,00</span>
<div class="hl" style="left:41px;top:196px;"></div>
<div class="rh" style="top:197px;"></div>
<span class="c l" style="left:44px;top:197px;">12345</span>
<span class="c l" style="left:107px;top:197px;">Hulll...</span>
<span class="sy" style="left:158px;width:44.5px;top:197px;">0,00</span>
<div class="cb" style="left:213px;top:201px;"><i></i><svg style="left:1px;top:1px" width="9" height="9" viewBox="0 0 9 9"><path d="M1.2 4.6 L3.6 7.3 L7.6 0.7" fill="none" stroke="#3c5197" stroke-width="1.6"/></svg></div>
<span class="c" style="left:237px;top:197px;">kpl</span>
<span class="c r" style="left:328px;width:47px;top:197px;">0,00</span>
<span class="c r" style="left:388px;width:47px;top:197px;">0,00</span>
<span class="c r" style="left:448px;width:47px;top:197px;">0,00</span>
<div class="hl" style="left:41px;top:218px;"></div>
<div class="rh" style="top:219px;"></div>
<span class="c l" style="left:44px;top:219px;">159270</span>
<span class="c l" style="left:107px;top:219px;">Vedi...</span>
<span class="sy" style="left:158px;width:44.5px;top:219px;">0,00</span>
<div class="cb" style="left:213px;top:223px;"><i></i><svg style="left:1px;top:1px" width="9" height="9" viewBox="0 0 9 9"><path d="M1.2 4.6 L3.6 7.3 L7.6 0.7" fill="none" stroke="#3c5197" stroke-width="1.6"/></svg></div>
<span class="c" style="left:237px;top:219px;">kpl</span>
<span class="c r" style="left:328px;width:47px;top:219px;">0,00</span>
<span class="c r" style="left:388px;width:47px;top:219px;">0,00</span>
<span class="c r" style="left:448px;width:47px;top:219px;">0,00</span>
<div class="hl" style="left:41px;top:240px;"></div>
<div class="rh" style="top:241px;"></div>
<span class="c l" style="left:44px;top:241px;">20*20*1,2</span>
<span class="c l" style="left:107px;top:241px;">neliö...</span>
<span class="sy" style="left:158px;width:44.5px;top:241px;">0,00</span>
<div class="cb" style="left:213px;top:245px;"><i></i><svg style="left:1px;top:1px" width="9" height="9" viewBox="0 0 9 9"><path d="M1.2 4.6 L3.6 7.3 L7.6 0.7" fill="none" stroke="#3c5197" stroke-width="1.6"/></svg></div>
<span class="c" style="left:237px;top:241px;">kpl</span>
<span class="c r" style="left:328px;width:47px;top:241px;">0,00</span>
<span class="c r" style="left:388px;width:47px;top:241px;">0,00</span>
<span class="c r" style="left:448px;width:47px;top:241px;">0,00</span>
<div class="hl" style="left:41px;top:262px;"></div>
<div class="rh" style="top:263px;"></div>
<span class="c l" style="left:44px;top:263px;">200111</span>
<span class="c l" style="left:107px;top:263px;">150 ...</span>
<span class="sy" style="left:158px;width:44.5px;top:263px;">0,00</span>
<div class="cb" style="left:213px;top:267px;"><i></i><svg style="left:1px;top:1px" width="9" height="9" viewBox="0 0 9 9"><path d="M1.2 4.6 L3.6 7.3 L7.6 0.7" fill="none" stroke="#3c5197" stroke-width="1.6"/></svg></div>
<span class="c" style="left:237px;top:263px;">m2</span>
<span class="c r" style="left:328px;width:47px;top:263px;">0,00</span>
<span class="c r" style="left:388px;width:47px;top:263px;">0,00</span>
<span class="c r" style="left:448px;width:47px;top:263px;">0,00</span>
<div class="hl" style="left:41px;top:284px;"></div>
<div class="rh" style="top:285px;"></div>
<span class="c l" style="left:44px;top:285px;">2059</span>
<span class="c l" style="left:107px;top:285px;">bam...</span>
<span class="sy" style="left:158px;width:44.5px;top:285px;">0,00</span>
<div class="cb" style="left:213px;top:289px;"><i></i><svg style="left:1px;top:1px" width="9" height="9" viewBox="0 0 9 9"><path d="M1.2 4.6 L3.6 7.3 L7.6 0.7" fill="none" stroke="#3c5197" stroke-width="1.6"/></svg></div>
<span class="c" style="left:237px;top:285px;">kpl</span>
<span class="c r" style="left:328px;width:47px;top:285px;">0,00</span>
<span class="c r" style="left:388px;width:47px;top:285px;">0,00</span>
<span class="c r" style="left:448px;width:47px;top:285px;">0,00</span>
<div class="hl" style="left:41px;top:306px;"></div>
<div class="rh" style="top:307px;"></div>
<span class="c l" style="left:44px;top:307px;">2x4</span>
<span class="c l" style="left:107px;top:307px;">Lank...</span>
<span class="sy" style="left:158px;width:44.5px;top:307px;">0,00</span>
<div class="cb" style="left:213px;top:311px;"><i></i><svg style="left:1px;top:1px" width="9" height="9" viewBox="0 0 9 9"><path d="M1.2 4.6 L3.6 7.3 L7.6 0.7" fill="none" stroke="#3c5197" stroke-width="1.6"/></svg></div>
<span class="c" style="left:237px;top:307px;">m</span>
<span class="c r" style="left:328px;width:47px;top:307px;">0,00</span>
<span class="c r" style="left:388px;width:47px;top:307px;">0,00</span>
<span class="c r" style="left:448px;width:47px;top:307px;">0,00</span>
<div class="hl" style="left:41px;top:328px;"></div>
<div class="rh" style="top:329px;"></div>
<span class="c l" style="left:44px;top:329px;">44474_P</span>
<span class="c l" style="left:107px;top:329px;">Siriu...</span>
<span class="sy" style="left:158px;width:44.5px;top:329px;">0,00</span>
<div class="cb" style="left:213px;top:333px;"><i></i><svg style="left:1px;top:1px" width="9" height="9" viewBox="0 0 9 9"><path d="M1.2 4.6 L3.6 7.3 L7.6 0.7" fill="none" stroke="#3c5197" stroke-width="1.6"/></svg></div>
<span class="c" style="left:237px;top:329px;">kpl</span>
<span class="c r" style="left:328px;width:47px;top:329px;">0,00</span>
<span class="c r" style="left:388px;width:47px;top:329px;">0,00</span>
<span class="c r" style="left:448px;width:47px;top:329px;">0,00</span>
<div class="hl" style="left:41px;top:350px;"></div>
<div class="rh" style="top:351px;"></div>
<span class="c l" style="left:44px;top:351px;">551</span>
<span class="c l" style="left:107px;top:351px;">Sign...</span>
<span class="sy" style="left:158px;width:44.5px;top:351px;">0,00</span>
<div class="cb" style="left:213px;top:355px;"><i></i><svg style="left:1px;top:1px" width="9" height="9" viewBox="0 0 9 9"><path d="M1.2 4.6 L3.6 7.3 L7.6 0.7" fill="none" stroke="#3c5197" stroke-width="1.6"/></svg></div>
<span class="c" style="left:237px;top:351px;">kpl</span>
<span class="c r" style="left:328px;width:47px;top:351px;">0,00</span>
<span class="c r" style="left:388px;width:47px;top:351px;">0,00</span>
<span class="c r" style="left:448px;width:47px;top:351px;">0,00</span>
<div class="hl" style="left:41px;top:372px;"></div>
<div class="rh" style="top:373px;"></div>
<span class="c l" style="left:44px;top:373px;">5540</span>
<span class="c l" style="left:107px;top:373px;">Legp...</span>
<span class="sy" style="left:158px;width:44.5px;top:373px;">0,00</span>
<div class="cb" style="left:213px;top:377px;"><i></i><svg style="left:1px;top:1px" width="9" height="9" viewBox="0 0 9 9"><path d="M1.2 4.6 L3.6 7.3 L7.6 0.7" fill="none" stroke="#3c5197" stroke-width="1.6"/></svg></div>
<span class="c" style="left:237px;top:373px;">kpl</span>
<span class="c r" style="left:328px;width:47px;top:373px;">0,00</span>
<span class="c r" style="left:388px;width:47px;top:373px;">0,00</span>
<span class="c r" style="left:448px;width:47px;top:373px;">0,00</span>
<div class="hl" style="left:41px;top:394px;"></div>
<div class="rh" style="top:395px;"></div>
<span class="c l" style="left:44px;top:395px;">606</span>
<span class="c l" style="left:107px;top:395px;">ID 6...</span>
<span class="sy" style="left:158px;width:44.5px;top:395px;">0,00</span>
<div class="cb" style="left:213px;top:399px;"><i></i></div>
<span class="c" style="left:237px;top:395px;">kpl</span>
<span class="c r" style="left:328px;width:47px;top:395px;">0,00</span>
<span class="c r" style="left:388px;width:47px;top:395px;">0,00</span>
<span class="c r" style="left:448px;width:47px;top:395px;">0,00</span>
<div class="hl" style="left:41px;top:416px;"></div>
<div class="rh" style="top:417px;"></div>
<span class="c l" style="left:44px;top:417px;">700</span>
<span class="c l" style="left:107px;top:417px;">FINL...</span>
<span class="sy" style="left:158px;width:44.5px;top:417px;">0,00</span>
<div class="cb" style="left:213px;top:421px;"><i></i></div>
<span class="c" style="left:237px;top:417px;">kpl</span>
<span class="c r" style="left:328px;width:47px;top:417px;">0,00</span>
<span class="c r" style="left:388px;width:47px;top:417px;">0,00</span>
<span class="c r" style="left:448px;width:47px;top:417px;">0,00</span>
<div class="hl" style="left:41px;top:438px;"></div>
<div class="rh" style="top:439px;"></div>
<span class="c l" style="left:44px;top:439px;">770</span>
<span class="c l" style="left:107px;top:439px;">EUR...</span>
<span class="sy" style="left:158px;width:44.5px;top:439px;">0,00</span>
<div class="cb" style="left:213px;top:443px;"><i></i></div>
<span class="c" style="left:237px;top:439px;">kpl</span>
<span class="c r" style="left:328px;width:47px;top:439px;">0,00</span>
<span class="c r" style="left:388px;width:47px;top:439px;">0,00</span>
<span class="c r" style="left:448px;width:47px;top:439px;">0,00</span>
<div class="hl" style="left:41px;top:460px;"></div>
<div class="vl" style="left:39px;top:21px;height:460px;background:#e0e0e0;"></div>
<div class="vl" style="left:40px;top:21px;height:460px;"></div>
<div class="vl" style="left:103px;top:21px;height:460px;"></div>
<div class="vl" style="left:144px;top:21px;height:460px;"></div>
<div class="vl" style="left:204px;top:21px;height:460px;"></div>
<div class="vl" style="left:234px;top:21px;height:460px;"></div>
<div class="vl" style="left:284px;top:21px;height:460px;"></div>
<div class="vl" style="left:319px;top:21px;height:460px;"></div>
<div class="vl" style="left:379px;top:21px;height:460px;"></div>
<div class="vl" style="left:439px;top:21px;height:460px;"></div>
<div class="vl" style="left:499px;top:21px;height:460px;"></div>
</div>
<svg style="left:0;top:0" width="644" height="574" viewBox="0 0 644 574">
<g fill="none" stroke="#fb0a1c" stroke-width="3">
<rect x="338.5" y="118.5" width="41" height="392"/>
<rect x="339.6" y="513" width="37.9" height="80"/>
<rect x="521.8" y="115.5" width="62.8" height="395.5"/>
<rect x="524.3" y="513" width="58.8" height="80"/>
<path d="M381 271.5 H396"/>
<path d="M478 290 H509"/>
<path d="M379 533.4 H391"/>
</g>
<g fill="#fb0a1c">
<path d="M394.5 264 L408.6 271.5 L394.5 279 Z"/>
<path d="M507.6 283.2 L521.2 290 L507.6 296.8 Z"/>
<path d="M389.3 526.7 L402.8 533.4 L389.3 540.2 Z"/>
</g>
<g fill="#ee1522" font-family="Liberation Sans, sans-serif" font-size="14.4">
<text x="409.8" y="275.9" textLength="79" lengthAdjust="spacingAndGlyphs">INVENTOITU</text>
<text x="409.8" y="295.3" textLength="64.5" lengthAdjust="spacingAndGlyphs">MÄÄRILLÄ</text>
<text x="403.2" y="538.2" textLength="94.4" lengthAdjust="spacingAndGlyphs">EI INVENTOITU</text>
</g>
</svg>
</body></html>
